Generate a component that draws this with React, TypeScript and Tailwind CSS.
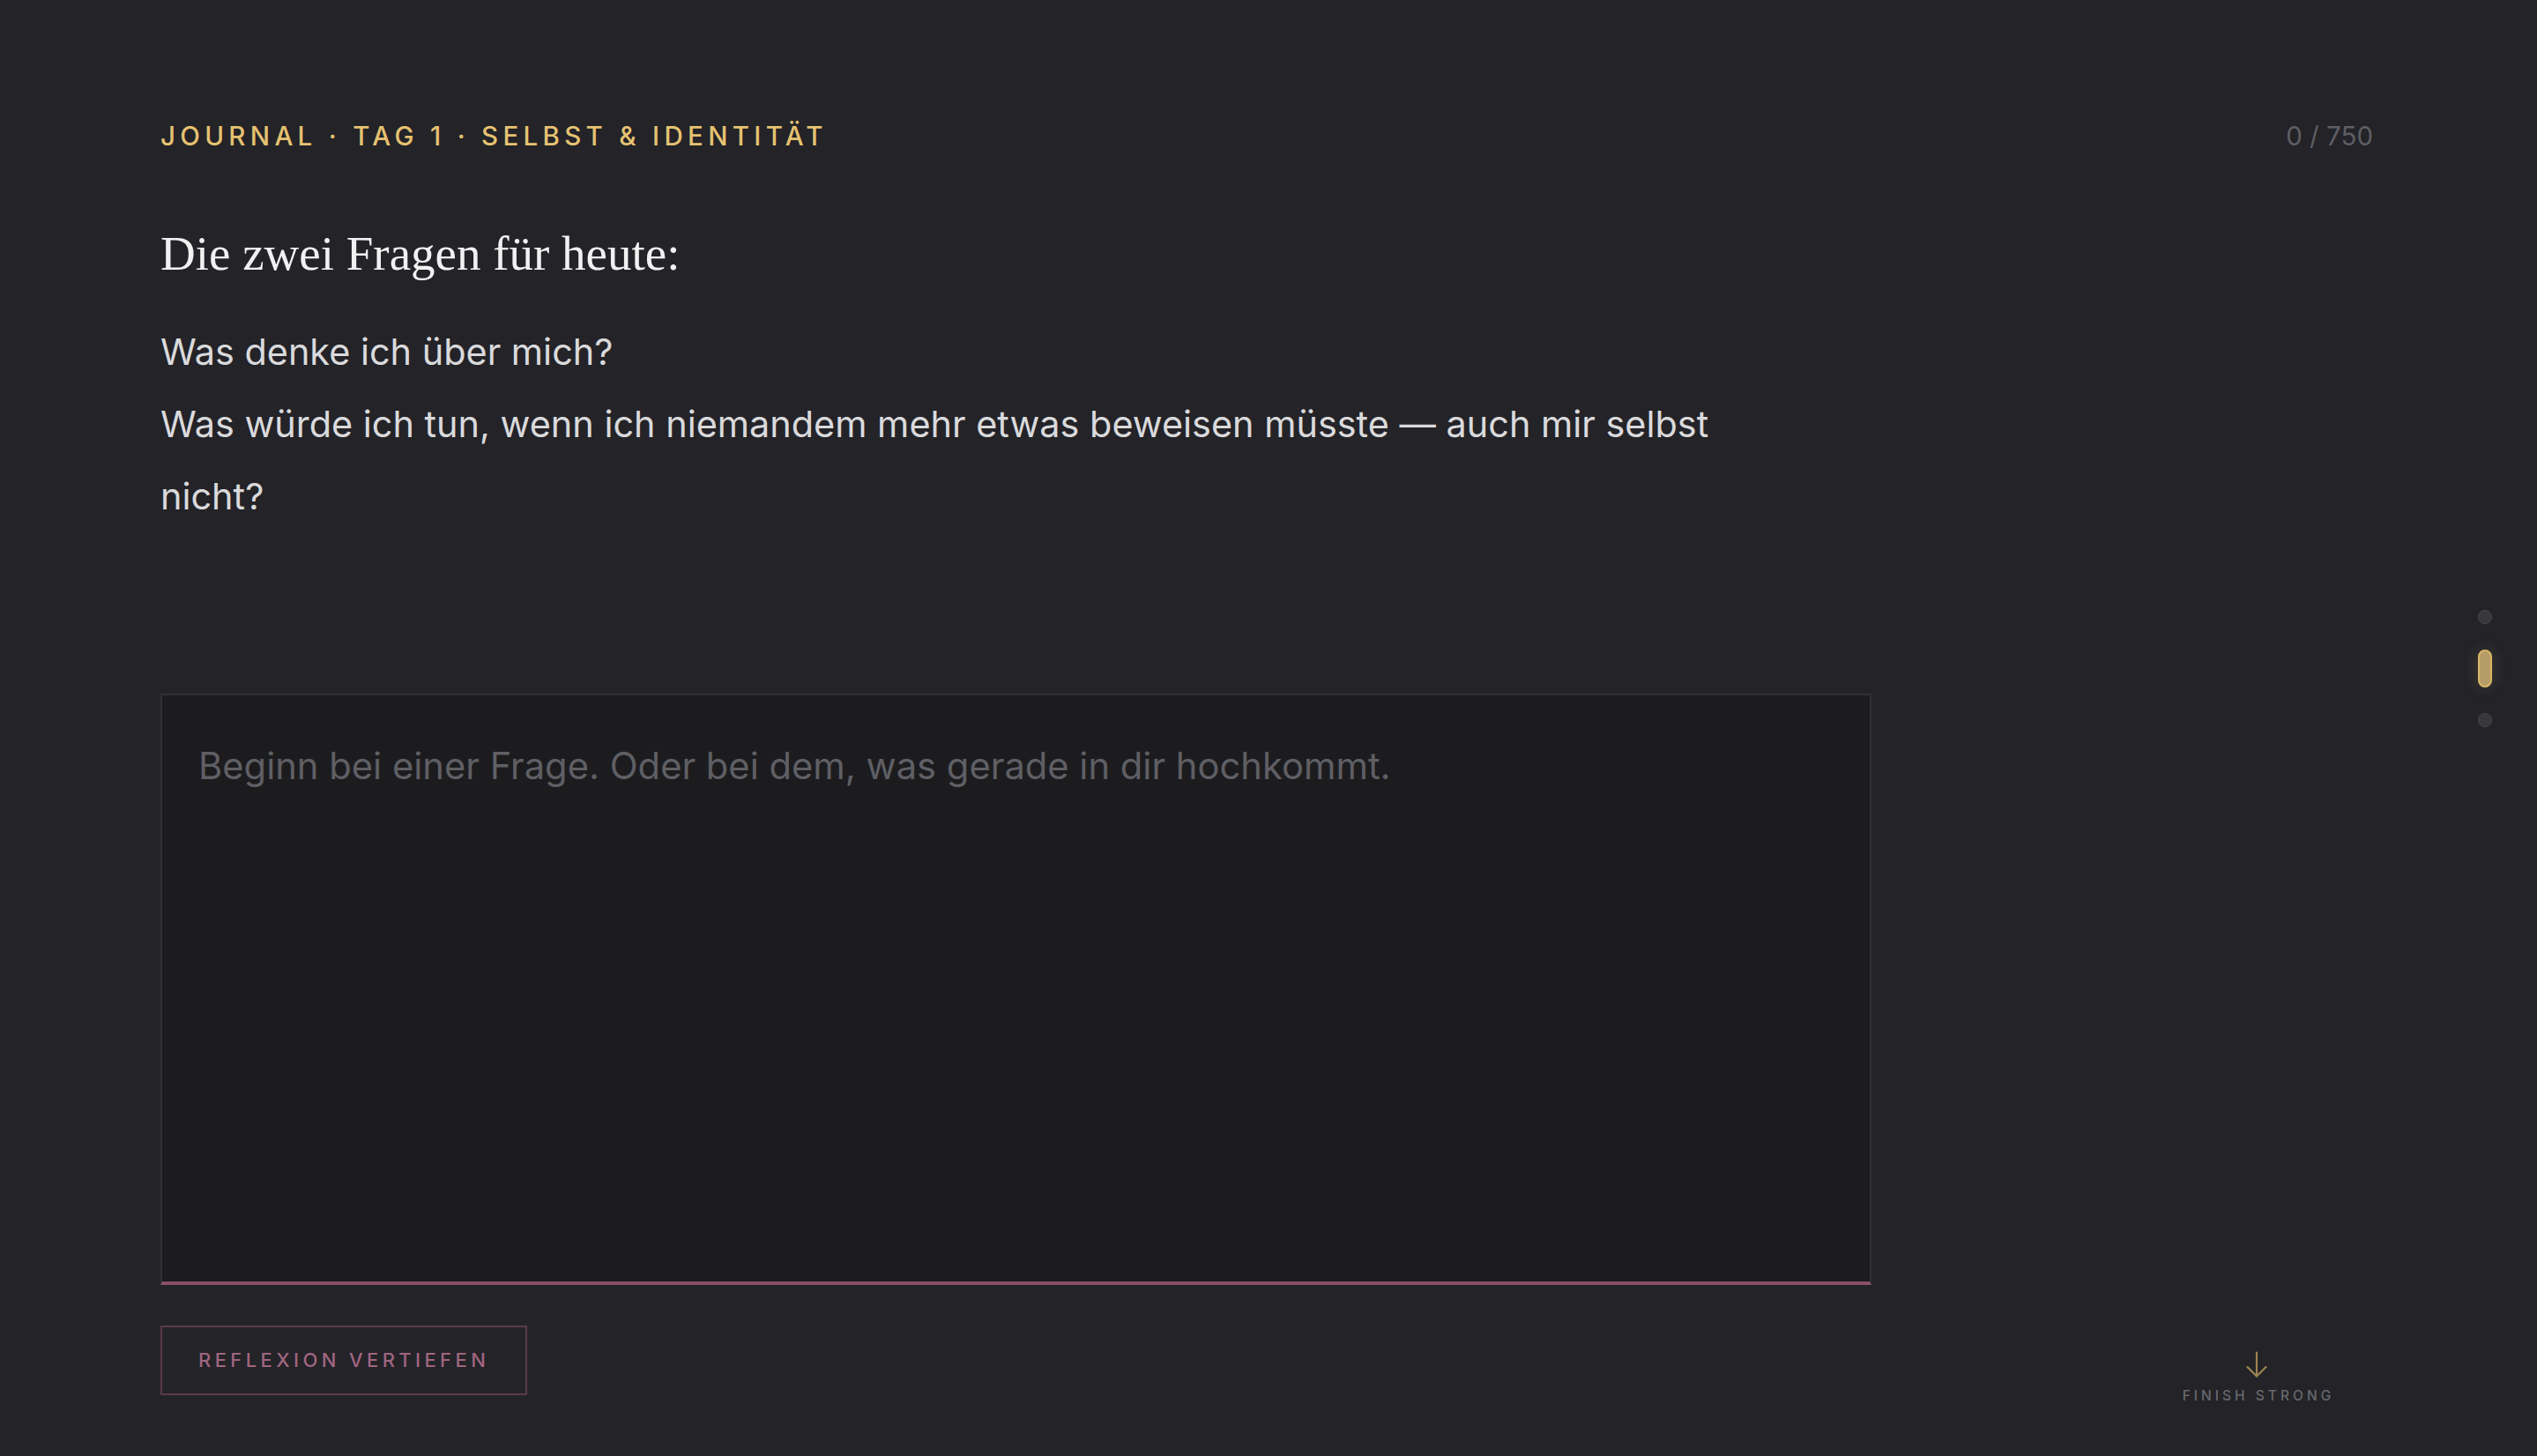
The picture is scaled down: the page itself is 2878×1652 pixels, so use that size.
import React from "react";

export default function App() {
  return (
    <div className="relative w-full h-[1652px] overflow-hidden bg-[#232328] font-['Inter','Noto_Sans',sans-serif]">
      <div className="flex flex-col pl-[182px] pr-[186px] pt-[140px]">
        <div className="flex items-start justify-between">
          <div className="text-[29.5px] leading-[29.5px] font-medium tracking-[0.18em] text-[#e6c271]">
            JOURNAL · TAG 1 · SELBST &amp; IDENTITÄT
          </div>
          <div className="text-[29.5px] leading-[29.5px] text-[#5e5e63]">0 / 750</div>
        </div>

        <h1 className="mt-[85px] text-[55px] leading-[66px] font-normal text-[#f1f1f1] font-['Liberation_Serif','DejaVu_Serif',serif]">
          Die zwei Fragen für heute:
        </h1>

        <div className="mt-[37px] max-w-[1820px] text-[41.4px] leading-[82px] text-[#dadadc]">
          <p>Was denke ich über mich?</p>
          <p>Was würde ich tun, wenn ich niemandem mehr etwas beweisen müsste — auch mir selbst nicht?</p>
        </div>

        <textarea
          className="mt-[183px] block w-[1941px] h-[671px] resize-none outline-none bg-[#1c1c1f] border-2 border-[#303035] border-b-4 border-b-[#8a5066] pl-[41px] pr-[40px] pt-[44px] text-[41.7px] leading-[72px] text-[#dadadc] placeholder:text-[#5f5f64]"
          placeholder="Beginn bei einer Frage. Oder bei dem, was gerade in dir hochkommt."
        />

        <div className="mt-[46px]">
          <button className="flex items-center w-[416px] h-[79px] border-2 border-[#5c3a4a] pl-[41px] text-[22px] leading-none font-medium tracking-[0.2em] text-[#a06580] bg-transparent">
            REFLEXION VERTIEFEN
          </button>
        </div>
      </div>

      {/* section indicator dots */}
      <div className="absolute right-[51px] top-[692px] flex flex-col items-center gap-[29px]">
        <div className="w-[16px] h-[16px] rounded-full bg-[#38383c] border-[1.5px] border-[#48484c]" />
        <div className="w-[16px] h-[43px] rounded-full bg-[#b69c66] border-2 border-[#d9b768] shadow-[0_0_18px_rgba(230,194,113,0.18)]" />
        <div className="w-[16px] h-[16px] rounded-full bg-[#38383c] border-[1.5px] border-[#48484c]" />
      </div>

      {/* finish strong */}
      <div className="absolute left-[2460px] top-[1533px] w-[200px] flex flex-col items-center">
        <svg width="24" height="30" viewBox="0 0 24 30" fill="none" stroke="#9c8450" strokeWidth="2.2" strokeLinecap="round" strokeLinejoin="round">
          <path d="M12 1.5V28.5" />
          <path d="M1.5 18L12 28.5L22.5 18" />
        </svg>
        <div className="mt-[13px] pl-[0.26em] text-[15.5px] leading-[15.5px] font-medium tracking-[0.26em] text-[#68686d]">
          FINISH STRONG
        </div>
      </div>
    </div>
  );
}
